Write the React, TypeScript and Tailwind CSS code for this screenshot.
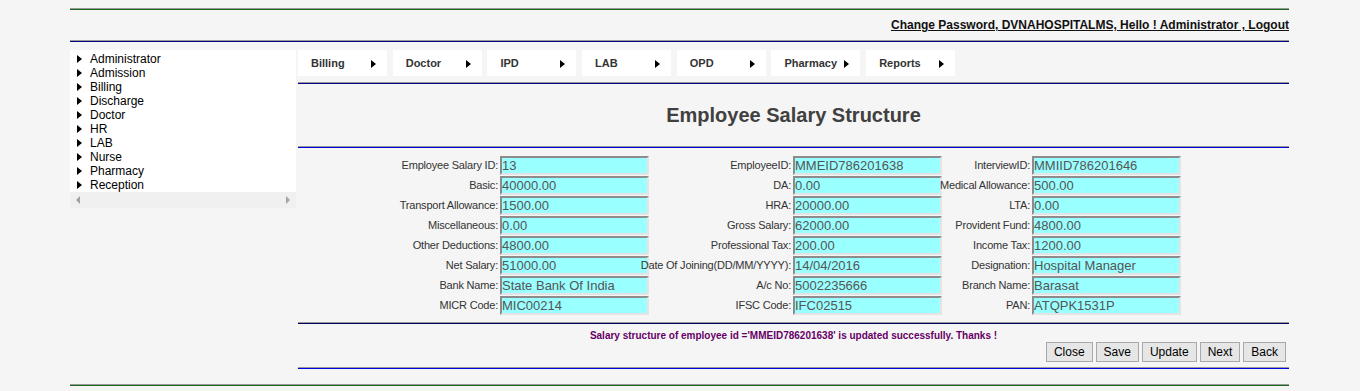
import React from "react";

const sideItems = ["Administrator", "Admission", "Billing", "Discharge", "Doctor", "HR", "LAB", "Nurse", "Pharmacy", "Reception"];
const menuItems = ["Billing", "Doctor", "IPD", "LAB", "OPD", "Pharmacy", "Reports"];

const rows: [string, string, string, string, string, string][] = [
  ["Employee Salary ID:", "13", "EmployeeID:", "MMEID786201638", "InterviewID:", "MMIID786201646"],
  ["Basic:", "40000.00", "DA:", "0.00", "Medical Allowance:", "500.00"],
  ["Transport Allowance:", "1500.00", "HRA:", "20000.00", "LTA:", "0.00"],
  ["Miscellaneous:", "0.00", "Gross Salary:", "62000.00", "Provident Fund:", "4800.00"],
  ["Other Deductions:", "4800.00", "Professional Tax:", "200.00", "Income Tax:", "1200.00"],
  ["Net Salary:", "51000.00", "Date Of Joining(DD/MM/YYYY):", "14/04/2016", "Designation:", "Hospital Manager"],
  ["Bank Name:", "State Bank Of India", "A/c No:", "5002235666", "Branch Name:", "Barasat"],
  ["MICR Code:", "MIC00214", "IFSC Code:", "IFC02515", "PAN:", "ATQPK1531P"],
];

function Rule({ color }: { color: string }) {
  return <div className={`h-[2px] border-t border-t-[#9a9a9a] ${color}`} />;
}

function Arrow() {
  return <span className="inline-block h-0 w-0 border-y-[4px] border-l-[5px] border-y-transparent border-l-black" />;
}

function Field({ label, value }: { label: string; value: string }) {
  return (
    <>
      <div className="flex h-[20px] items-center justify-end whitespace-nowrap pr-[2px] text-[11px] tracking-[-0.2px] text-[#333]">
        <span className="shrink-0">{label}</span>
      </div>
      <div className="flex h-[20px] items-center">
        <input
          readOnly
          value={value}
          className="h-[19px] w-[149px] border-2 border-t-[#8c8c8c] border-l-[#8c8c8c] border-r-[#e4e4e4] border-b-[#e4e4e4] bg-[#99ffff] px-0 text-[13px] leading-[15px] text-[#555] outline-none"
        />
      </div>
    </>
  );
}

export default function App() {
  return (
    <div className="min-h-[391px] bg-[#f5f5f5] pt-[8px] font-['Liberation_Sans',Arial,sans-serif] text-black">
      <div className="ml-[70px] w-[1219px]">
        <Rule color="bg-[#1c6b1c]" />
        <div className="flex h-[30px] items-center justify-end text-[12px] font-bold text-[#111] underline">
          Change Password, DVNAHOSPITALMS, Hello ! Administrator , Logout
        </div>
        <Rule color="bg-[#000080]" />

        <div className="mt-[8px] flex">
          <div className="w-[226px]">
            <div className="bg-white pt-[2px]">
              {sideItems.map((s) => (
                <div key={s} className="flex h-[14px] items-center text-[12px] leading-[14px]">
                  <span className="ml-[7px] mr-[8px] flex items-center">
                    <Arrow />
                  </span>
                  <span>{s}</span>
                </div>
              ))}
            </div>
            <div className="flex h-[16px] items-center justify-between bg-[#f0f0f0] px-[6px]">
              <span className="inline-block h-0 w-0 border-y-[4px] border-r-[4px] border-y-transparent border-r-[#a3a3a3]" />
              <span className="inline-block h-0 w-0 border-y-[4px] border-l-[4px] border-y-transparent border-l-[#a3a3a3]" />
            </div>
          </div>

          <div className="ml-[2px] flex-1">
            <div className="flex gap-[5.7px]">
              {menuItems.map((m) => (
                <div key={m} className="flex h-[26px] w-[89px] items-center justify-between bg-white pt-[1px] pl-[13px] pr-[11px] text-[11px] font-bold text-[#333]">
                  <span>{m}</span>
                  <Arrow />
                </div>
              ))}
            </div>
            <div className="mt-[6px]">
              <Rule color="bg-[#000080]" />
            </div>
            <div className="flex h-[62px] items-center justify-center text-[20px] font-bold text-[#404040]">
              Employee Salary Structure
            </div>
            <Rule color="bg-[#0000e0]" />

            <div className="mt-[7px] flex justify-center">
              <div className="grid grid-cols-[96px_151px_142px_151px_88px_151px]">
                {rows.map((r) => (
                  <React.Fragment key={r[0]}>
                    <Field label={r[0]} value={r[1]} />
                    <Field label={r[2]} value={r[3]} />
                    <Field label={r[4]} value={r[5]} />
                  </React.Fragment>
                ))}
              </div>
            </div>

            <div className="mt-[7px]">
              <Rule color="bg-[#000060]" />
            </div>
            <div className="mt-[6px] text-center text-[10px] font-bold leading-[12px] text-[#660066]">
              Salary structure of employee id ='MMEID786201638' is updated successfully. Thanks !
            </div>
            <div className="flex justify-end gap-[3px] pr-[3px]">
              {["Close", "Save", "Update", "Next", "Back"].map((b) => (
                <button key={b} className="h-[20px] border border-[#a8a8a8] bg-[#e6e6e6] px-[7px] text-[12px] leading-none text-black">
                  {b}
                </button>
              ))}
            </div>
            <div className="mt-[5px]">
              <Rule color="bg-[#0000e0]" />
            </div>
          </div>
        </div>

        <div className="mt-[15px]">
          <Rule color="bg-[#1c6b1c]" />
        </div>
      </div>
    </div>
  );
}
